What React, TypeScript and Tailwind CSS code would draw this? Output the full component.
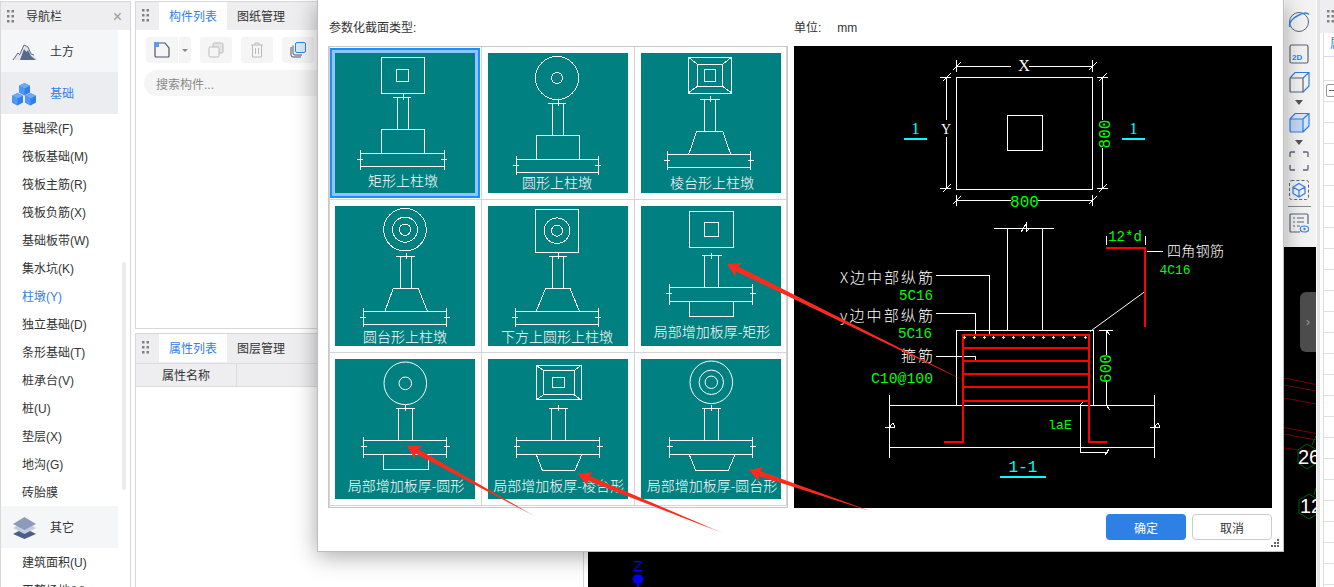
import React from "react";

const rect = (a: number, b: number, c: number, d: number) => `M${a} ${b}H${c}V${d}H${a}Z`;
const col = (l: number, r: number, y: number, b: number, dl: number, dr: number, cx?: number) =>
  `M${dl} ${y}H${dr}M${l} ${y}V${b}M${r} ${y}V${b}M${cx ?? (l + r) / 2} ${y - 3}V${y + 3}`;
const plate = (l: number, r: number, t: number, b: number) =>
  `M${l} ${t}H${r}M${l} ${b}H${r}M${l} ${t - 3}V${b + 3}M${r} ${t - 3}V${b + 3}M${l - 3} ${t + 6}H${l + 3}M${r - 3} ${t + 6}H${r + 3}`;
const frustum = (tl: number, tr: number, bl: number, br: number, t: number, b: number) =>
  `M${tl} ${t}H${tr}L${br} ${b}H${bl}Z`;
const pyramid = (o: number[], m: number[], i: number[]) =>
  rect(o[0], o[1], o[2], o[3]) + rect(m[0], m[1], m[2], m[3]) + rect(i[0], i[1], i[2], i[3]) +
  `M${o[0]} ${o[1]}L${m[0]} ${m[1]}M${o[2]} ${o[1]}L${m[2]} ${m[1]}M${o[0]} ${o[3]}L${m[0]} ${m[3]}M${o[2]} ${o[3]}L${m[2]} ${m[3]}`;

type Cell = { label: string; lx: number; ly: number; d: string; circles?: number[][]; smooth?: boolean };
const cells: Cell[] = [
  { label: "矩形上柱墩", lx: 68, ly: 133, d: rect(46, 4, 89, 40) + rect(61, 16, 73, 28) + col(62.5, 73.5, 44, 76, 58, 76) + rect(46, 76, 89, 100) + plate(25, 109, 100, 113.5) },
  { label: "圆形上柱墩", lx: 69, ly: 135, d: col(64.7, 75.7, 50, 82, 60, 78) + rect(48.3, 82, 91.3, 106) + plate(28.3, 110, 106, 119), circles: [[69, 25, 21.5], [69, 25, 5.5]] },
  { label: "棱台形上柱墩", lx: 71, ly: 135, d: pyramid([47.3, 4, 90.7, 40], [56.3, 11.3, 81.7, 33.3], [63.3, 16, 74.7, 28]) + col(63.3, 74.7, 46.3, 78.3, 59.3, 78.7) + frustum(55.7, 81.7, 47.7, 89.7, 78.3, 101.3) + plate(26.3, 109.7, 101.3, 114.3) },
  { label: "圆台形上柱墩", lx: 70, ly: 136, d: col(65.7, 76.7, 50.3, 82.3, 61.3, 80) + frustum(58.3, 83.3, 50, 92.3, 82.3, 105) + plate(28.3, 111.7, 105, 118.3), circles: [[70, 23.7, 21.3], [70, 23.7, 12.5], [70, 23.7, 5.7]] },
  { label: "下方上圆形上柱墩", lx: 69, ly: 136, d: rect(47.3, 3.3, 90.3, 46.3) + col(64.7, 75.7, 50.3, 82.3, 60.5, 79) + frustum(57.7, 82, 48.3, 91.3, 82.3, 105) + plate(27.3, 110.3, 105, 118.3), circles: [[69, 24.7, 12.8], [69, 24.7, 5.5]] },
  { label: "局部增加板厚-矩形", lx: 71, ly: 131, d: rect(48.3, 5.3, 92.7, 41.7) + rect(63.3, 16.3, 77.7, 30.7) + col(63.3, 77.7, 49.7, 81.3, 61.3, 80.7) + plate(28.3, 111.7, 81.3, 95.7) + rect(48.3, 95.7, 92.7, 110.7) },
  { label: "局部增加板厚-圆形", lx: 71, ly: 132, smooth: true, d: col(63.3, 77.7, 49.3, 81.3, 60.7, 80.3) + plate(28.7, 111.7, 81.3, 95.7) + rect(48.3, 95.7, 93.7, 110.3), circles: [[70.3, 24.3, 21.3], [70.3, 24.3, 6.3]] },
  { label: "局部增加板厚-棱台形", lx: 70.7, ly: 132, d: pyramid([48.3, 6.3, 93, 40.7], [55.7, 11.7, 86, 35.7], [64.3, 18.3, 76.7, 28.7]) + col(63.3, 77.7, 49.3, 81.3, 60.7, 80) + plate(28.7, 111.7, 81.3, 95.7) + `M48.3 95.7L54.3 111.3H87L93.7 95.7` },
  { label: "局部增加板厚-圆台形", lx: 71, ly: 132, smooth: true, d: col(63.3, 77.7, 49.3, 81.3, 60.7, 80) + plate(28.7, 111.7, 81.3, 95.7) + `M48.3 95.7L54.7 111.3H87.3L94 95.7`, circles: [[70.3, 23.3, 21.3], [70.3, 23.3, 12.2], [70.3, 23.3, 6.2]] },
];

function Grip({ className = "" }: { className?: string }) {
  return (
    <svg width="7" height="13" viewBox="0 0 7 13" className={className}>
      {[0, 5, 10].map((y) => [0, 4.5].map((x) => <rect key={`${x}${y}`} x={x} y={y} width="2.5" height="2.5" fill="#808080" />))}
    </svg>
  );
}

function TealCell({ c, selected }: { c: Cell; selected?: boolean }) {
  return (
    <div className="border-r border-b border-[#d4d4d4] pl-[6px] pt-[6px]">
      <div className={`h-[140px] w-[140px] bg-[#008080] ${selected ? "shadow-[0_0_0_3px_#91c4ff,0_0_0_5px_#1890ff]" : ""}`}>
        <svg width="140" height="140" viewBox="0 0 140 140" className="block">
          <path d={c.d} fill="none" stroke="#fff" strokeWidth="1" shapeRendering="crispEdges" />
          {c.circles?.map((k, i) => (
            <circle key={i} cx={k[0]} cy={k[1]} r={k[2]} fill="none" stroke="#fff" strokeWidth="1" shapeRendering={c.smooth ? "auto" : "crispEdges"} />
          ))}
          <text x={c.lx} y={c.ly} textAnchor="middle" fill="#fff" fontSize="14" fontFamily="'Noto Sans CJK SC',sans-serif" fontWeight="300">{c.label}</text>
        </svg>
      </div>
    </div>
  );
}

const MONO = "'Liberation Mono',monospace";
const SERIF = "'Liberation Serif',serif";
const CJK = "'Noto Sans CJK SC',sans-serif";

function Cad() {
  const G = "#00ff00";
  const hoops = [347.5, 360.5, 374, 387, 401];
  const dots = [964, 974, 984, 993, 1003, 1013, 1023, 1033, 1043, 1053, 1063, 1074, 1085.5];
  const tick = (x: number, y: number) => `M${x - 4} ${y + 4}L${x + 4} ${y - 4}`;
  const white =
    // plan
    rect(956.5, 77.5, 1092.5, 189.5) + rect(1007.5, 115.5, 1042.5, 150.5) +
    `M956.5 66.5H1011M1029 66.5H1092.5M956.5 60V72M1092.5 60V72` + tick(956.5, 66.5) + tick(1092.5, 66.5) +
    `M946.5 78V120M946.5 137V188M940 77.5H951M940 188.5H951` + tick(946.5, 77.5) + tick(946.5, 188.5) +
    `M956.5 200.5H1011M1038 200.5H1092.5M956.5 195V206M1092.5 195V206` + tick(956.5, 200.5) + tick(1092.5, 200.5) +
    `M1102.5 78V120M1102.5 148V188M1097 77.5H1108M1097 188.5H1108` + tick(1102.5, 77.5) + tick(1102.5, 188.5) +
    // section
    `M994 228.5H1054M1007.5 228.5V330.5M1042.5 228.5V330.5M1021 232L1026 224L1026 232L1030 228` +
    rect(956.5, 330.5, 1093.5, 405.5) +
    `M889.5 405.5H1154.5M889.5 447.5H1154.5M889.5 395V458M1154.5 395V458M885 427H895M1150 427H1160M889.5 427L893 423L895 427M1154.5 427L1158 423L1160 427` +
    `M936 275.5H989.5V335M936 313.5H975.5V335M936 356.5H975.5V361` +
    `M1147 251.5H1163` +
    `M1106.5 331V355M1106.5 381V405M1099 330.5H1113M1106 405L1110 410M1106 330L1110 335` +
    `M1080.5 404V452.5H1108M1080 405L1083 402M1105 455L1109 449` +
    `M1106 236V245M1145 236V245`;
  return (
    <svg width="478" height="462" viewBox="794 46 478 462" className="block bg-black">
      <path d={white} fill="none" stroke="#fff" strokeWidth="1" shapeRendering="crispEdges" />
      <path d="M1145 291.5L1090 331.5" fill="none" stroke="#fff" strokeWidth="1" />
      {/* cyan section marks */}
      <path d="M904 139H927M1122 139H1145M1000 477H1046" stroke="#00ffff" strokeWidth="2" shapeRendering="crispEdges" />
      {/* rebars */}
      <path d={`M944 442H962.5V335H1089V442H1106.5M1106 247.5H1145V326.5` + hoops.map((y) => `M962.5 ${y}H1089`).join("")} fill="none" stroke="#ff0000" strokeWidth="2" shapeRendering="crispEdges" />
      {dots.map((x) => (
        <path key={x} d={`M${x - 1.5} 337.5H${x + 1.5}M${x} 336V339`} stroke="#ffff00" strokeWidth="1" shapeRendering="crispEdges" />
      ))}
      <g fontFamily={MONO} fontSize="15">
        <text x="1024" y="71" fill="#fff" textAnchor="middle" fontFamily={SERIF} fontSize="16">X</text>
        <text x="946" y="134" fill="#fff" textAnchor="middle" fontFamily={SERIF} fontSize="14">Y</text>
        <text x="1024.5" y="207" fill={G} textAnchor="middle" fontSize="16">800</text>
        <text x="915.5" y="134" fill="#00ffff" textAnchor="middle" fontFamily={SERIF} fontSize="16">1</text>
        <text x="1133.5" y="134" fill="#00ffff" textAnchor="middle" fontFamily={SERIF} fontSize="16">1</text>
        <text x="1023" y="472" fill="#00ffff" textAnchor="middle" fontSize="16">1-1</text>
        <text x="0" y="0" fill={G} textAnchor="middle" fontSize="16" transform="translate(1110 134) rotate(-90)">800</text>
        <text x="0" y="0" fill={G} textAnchor="middle" fontSize="16" transform="translate(1111 368.5) rotate(-90)">600</text>
        <text x="1125" y="241" fill={G} textAnchor="middle" fontSize="14">12*d</text>
        <text x="1175" y="274" fill={G} textAnchor="middle" fontSize="13">4C16</text>
        <text x="899" y="300" fill={G} textLength="34" lengthAdjust="spacingAndGlyphs" fontSize="15">5C16</text>
        <text x="898" y="338" fill={G} textLength="34" lengthAdjust="spacingAndGlyphs" fontSize="15">5C16</text>
        <text x="871" y="383" fill={G} textLength="62" lengthAdjust="spacingAndGlyphs" fontSize="15">C10@100</text>
        <text x="1060" y="429" fill={G} textAnchor="middle" fontSize="13">laE</text>
      </g>
      <g fontFamily={CJK} fill="#fff" fontWeight="300">
        <text x="840" y="283" fontSize="15" textLength="93">X边中部纵筋</text>
        <text x="840" y="321" fontSize="15" textLength="93">y边中部纵筋</text>
        <text x="901" y="361" fontSize="15" textLength="32">箍筋</text>
        <text x="1167" y="256" fontSize="14" textLength="57">四角钢筋</text>
      </g>
    </svg>
  );
}

function Arrow({ id, tip, tail, fade = 0.8 }: { id: string; tip: number[]; tail: number[]; fade?: number }) {
  const dx = tail[0] - tip[0];
  const dy = tail[1] - tip[1];
  const l = Math.hypot(dx, dy);
  const u = [dx / l, dy / l];
  const n = [-u[1], u[0]];
  const pt = (a: number, b: number) => `${tip[0] + u[0] * a + n[0] * b},${tip[1] + u[1] * a + n[1] * b}`;
  const pts = [pt(0, 0), pt(13, 7.5), pt(11, 2.6), `${tail[0]},${tail[1]}`, pt(11, -2.6), pt(13, -7.5)].join(" ");
  return (
    <g>
      <defs>
        <linearGradient id={id} gradientUnits="userSpaceOnUse" x1={tip[0]} y1={tip[1]} x2={tail[0]} y2={tail[1]}>
          <stop offset="0" stopColor="#ff2a1c" />
          <stop offset={fade} stopColor="#ff2a1c" />
          <stop offset="1" stopColor="#ff2a1c" stopOpacity="0.25" />
        </linearGradient>
      </defs>
      <polygon points={pts} fill={`url(#${id})`} />
    </g>
  );
}

const I = "#5b6478";
const B = "#2f80ed";

function ToolRail() {
  return (
    <div className="absolute top-0 right-0 flex h-[247px] w-[32px] flex-col items-center border-l border-white bg-[#f3f3f3] pr-[3px] pt-[11px]">
      <svg width="22" height="22" viewBox="0 0 22 22">
        <circle cx="11" cy="11" r="9.5" fill="none" stroke={I} strokeWidth="1" transform="scale(1 1)" />
        <path d="M2 16C0 12 5 7 10 4.5C15 2 19.5 1.5 20.8 3.5" fill="none" stroke={B} strokeWidth="1.4" />
      </svg>
      <svg width="20" height="20" viewBox="0 0 20 20" className="mt-[11px]">
        <rect x="1" y="1" width="18" height="18" rx="1.5" fill="none" stroke={I} strokeWidth="1.2" />
        <text x="3" y="16" fontSize="8" fontWeight="700" fill={B} fontFamily="'Liberation Sans',sans-serif">2D</text>
      </svg>
      <svg width="21" height="22" viewBox="0 0 21 22" className="mt-[7px]">
        <path d="M1 7V20a1 1 0 0 0 1 1H14V7H1" fill="none" stroke={I} strokeWidth="1.2" />
        <path d="M1 7L6 1.5H20V15L14 21M14 7L20 1.5" fill="none" stroke={B} strokeWidth="1.2" />
      </svg>
      <div className="mt-[7px] h-0 w-0 border-x-[4px] border-t-[5px] border-x-transparent border-t-[#555]" />
      <svg width="21" height="21" viewBox="0 0 21 21" className="mt-[7px]">
        <path d="M1 7L6 1.5H20L14 7Z" fill="#dbe8fa" />
        <path d="M14 7L20 1.5V14L14 20Z" fill="#dbe8fa" />
        <path d="M1 7H14V20H2a1 1 0 0 1-1-1Z" fill="#c4d9f6" />
        <path d="M1 7H14V20H2a1 1 0 0 1-1-1ZM1 7L6 1.5H20V14L14 20M14 7L20 1.5" fill="none" stroke={B} strokeWidth="1.2" />
      </svg>
      <div className="mt-[7px] h-0 w-0 border-x-[4px] border-t-[5px] border-x-transparent border-t-[#555]" />
      <svg width="20" height="20" viewBox="0 0 20 20" className="mt-[6px]">
        <path d="M1 6V2a1 1 0 0 1 1-1H6M14 1H18a1 1 0 0 1 1 1V6M19 14V18a1 1 0 0 1-1 1H14M6 19H2a1 1 0 0 1-1-1V14" fill="none" stroke={I} strokeWidth="1.3" />
      </svg>
      <svg width="20" height="20" viewBox="0 0 20 20" className="mt-[9px]">
        <rect x="0.5" y="0.5" width="19" height="19" rx="2" fill="none" stroke={I} strokeDasharray="3 2" />
        <path d="M10 3.5L16 7V13.5L10 17L4 13.5V7ZM4 7L10 10.5L16 7M10 10.5V17" fill="none" stroke={B} strokeWidth="1.2" />
      </svg>
      <div className="mt-[6px] h-px w-[23px] bg-[#8a8a8a]" />
      <svg width="20" height="20" viewBox="0 0 20 20" className="mt-[6px]">
        <path d="M11 19H2a1 1 0 0 1-1-1V2a1 1 0 0 1 1-1H18a1 1 0 0 1 1 1V11" fill="none" stroke={I} strokeWidth="1.2" />
        <path d="M4 5H6M8 5H15M4 9H6M8 9H15M4 13H6M8 13H11" stroke={I} strokeWidth="1.1" />
        <ellipse cx="15.5" cy="16" rx="4.2" ry="3" fill="#f3f3f3" stroke={B} strokeWidth="1.1" />
        <circle cx="15.5" cy="16" r="1.2" fill={B} />
      </svg>
    </div>
  );
}

function NavHead({ label, active, icon }: { label: string; active?: boolean; icon: React.ReactNode }) {
  return (
    <div className={`flex h-[42px] items-center pl-[11px] pt-[2px] ${active ? "bg-[#ecedf1] text-[#3a7fe0]" : "bg-[#f5f6f8] text-[#333]"}`}>
      <div className="w-[38px]">{icon}</div>
      <span>{label}</span>
    </div>
  );
}

const subs = ["基础梁(F)", "筏板基础(M)", "筏板主筋(R)", "筏板负筋(X)", "基础板带(W)", "集水坑(K)", "柱墩(Y)", "独立基础(D)", "条形基础(T)", "桩承台(V)", "桩(U)", "垫层(X)", "地沟(G)", "砖胎膜"];

function Nav() {
  return (
    <div className="mt-px flex h-full w-[131px] shrink-0 flex-col border-x border-t border-[#d8d8d8]">
      <div className="flex h-[28px] shrink-0 items-center bg-[#eeeef0] pl-[6px] pt-[2px] text-[#333]">
        <Grip className="-mt-[2px]" />
        <span className="ml-[12px]">导航栏</span>
        <span className="ml-auto mr-[8px] text-[16px] leading-none text-[#999]">×</span>
      </div>
      <div className="flex min-h-0 flex-1 overflow-hidden">
        <div className="w-[117px] shrink-0">
          <NavHead label="土方" icon={
            <svg width="25" height="17" viewBox="0 0 25 17" className="block">
              <path d="M0 16L6 8L8 10L12 1L16 3L19 10L22 11L25 16Z" fill="#e3e6ee" />
              <path d="M8 16L12 5L14.5 8L16 6L19 12L24 16Z" fill="#5a6a8c" />
              <path d="M1 16L6 9L8 11" fill="none" stroke="#5a6a8c" />
              <path d="M8 10L12 1L16 3L19 10L22 11" fill="none" stroke="#5a6a8c" />
            </svg>
          } />
          <NavHead label="基础" active icon={
            <svg width="24" height="23" viewBox="0 0 24 23" className="block">
              {[[7, 0], [0, 10], [13, 10]].map(([x, y]) => (
                <g key={`${x}${y}`} transform={`translate(${x} ${y})`}>
                  <path d="M5.5 0L11 2.8V9.5L5.5 12.5L0 9.5V2.8Z" fill="#2f80ed" />
                  <path d="M5.5 0L11 2.8L5.5 5.6L0 2.8Z" fill="#6eaaf5" />
                  <path d="M5.5 5.6V12.5L0 9.5V2.8Z" fill="#4f97f2" />
                </g>
              ))}
            </svg>
          } />
          {subs.map((s) => (
            <div key={s} className={`flex h-[28px] items-center pl-[21px] pt-[2px] ${s === "柱墩(Y)" ? "text-[#3a7fe0]" : "text-[#333]"}`}>{s}</div>
          ))}
          <NavHead label="其它" icon={
            <svg width="25" height="23" viewBox="0 0 25 23" className="block">
              <path d="M1 17L12.5 11L24 17L12.5 22Z" fill="#4a5f8c" />
              <path d="M1 11L12.5 5L24 11L12.5 17Z" fill="#c5cddd" />
              <path d="M1 7L12.5 0L24 7L12.5 13Z" fill="#8c9bbb" />
            </svg>
          } />
          <div className="flex h-[28px] items-center pl-[21px] pt-[2px] text-[#333]">建筑面积(U)</div>
          <div className="flex h-[28px] items-center pl-[21px] pt-[2px] text-[#333]">平整场地(V)</div>
        </div>
        <div className="pl-[4px]">
          <div className="mt-[232px] h-[228px] w-[4px] rounded-full bg-[#ececec]" />
        </div>
      </div>
    </div>
  );
}

function Tabs({ a, b }: { a: string; b: string }) {
  return (
    <div className="flex h-[28px] shrink-0 items-start bg-[#eeeef0] pl-[6px]">
      <Grip className="mt-[7px]" />
      <div className="ml-[10px] flex h-[28px] items-center bg-white px-[10px] pt-[2px] text-[#2f80ed]">{a}</div>
      <div className="flex h-[28px] items-center px-[10px] pt-[2px] text-[#333]">{b}</div>
    </div>
  );
}

function ToolBtn({ children, className = "" }: { children: React.ReactNode; className?: string }) {
  return <div className={`flex h-[26px] w-[32px] items-center justify-center rounded-[3px] bg-[#f5f5f5] ${className}`}>{children}</div>;
}

function Panels() {
  return (
    <div className="ml-[4px] mt-px flex h-full w-[449px] shrink-0 flex-col gap-[4px]">
      <div className="flex h-[328px] flex-col border border-[#d8d8d8]">
        <Tabs a="构件列表" b="图纸管理" />
        <div className="mt-[7px] flex pl-[10px]">
          <ToolBtn className="rounded-r-none">
            <svg width="16" height="16" viewBox="0 0 16 16">
              <path d="M1 3V14a1 1 0 0 0 1 1H14a1 1 0 0 0 1-1V6L11 1H5" fill="none" stroke="#4a5468" strokeWidth="1.2" />
              <rect x="0" y="0" width="5" height="5" fill="#5b9cf0" />
            </svg>
          </ToolBtn>
          <div className="ml-px flex h-[26px] w-[12px] items-center justify-center rounded-r-[3px] bg-[#f5f5f5]">
            <div className="h-0 w-0 border-x-[3px] border-t-[3px] border-x-transparent border-t-[#888]" />
          </div>
          <ToolBtn className="ml-[9px]">
            <svg width="16" height="16" viewBox="0 0 16 16">
              <rect x="5" y="1" width="10" height="10" rx="1.5" fill="#e4e4e4" stroke="#bbb" />
              <rect x="1" y="5" width="10" height="10" rx="1.5" fill="#f5f5f5" stroke="#bbb" />
            </svg>
          </ToolBtn>
          <ToolBtn className="ml-[9px]">
            <svg width="14" height="16" viewBox="0 0 14 16">
              <path d="M1 3H13M5 3V1H9V3M2.5 3V15H11.5V3M5.5 6V12M8.5 6V12" fill="none" stroke="#bbb" />
            </svg>
          </ToolBtn>
          <ToolBtn className="ml-[9px]">
            <svg width="16" height="16" viewBox="0 0 16 16">
              <path d="M1 5V13a2 2 0 0 0 2 2H11" fill="none" stroke="#4a5468" />
              <path d="M3 3.5V11a2 2 0 0 0 2 2H12" fill="none" stroke="#4a5468" />
              <rect x="5.5" y="0.5" width="10" height="10" rx="1.5" fill="#dbe8fa" stroke="#2f80ed" />
            </svg>
          </ToolBtn>
        </div>
        <div className="ml-[8px] mt-[7px] flex h-[26px] items-center rounded-l-full bg-[#f5f5f5] pl-[12px] pt-[3px] text-[#888]">搜索构件...</div>
      </div>
      <div className="flex min-h-0 flex-1 flex-col border border-[#d8d8d8]">
        <Tabs a="属性列表" b="图层管理" />
        <div className="h-px shrink-0 bg-[#eeeef0]" />
        <div className="flex h-[24px] shrink-0 border-t border-b border-[#dcdcdc] bg-[#eeeef0] text-[#333]">
          <div className="flex w-[101px] items-center justify-center border-r border-[#dcdcdc] pt-[2px]">属性名称</div>
        </div>
      </div>
    </div>
  );
}

function Canvas() {
  const reds = ["M1284 378L1316 384.5", "M1284 385L1316 391", "M1284 398L1316 404", "M1284 427.5L1316 433.5", "M1284 434L1316 440", "M1284 448L1316 452"];
  return (
    <div className="relative ml-[4px] h-full w-[728px] shrink-0 overflow-hidden bg-black">
      <svg width="728" height="587" viewBox="588 0 728 587" className="absolute inset-0">
        {reds.map((d) => <path key={d} d={d} stroke="#7a0000" strokeWidth="1" />)}
        <path d="M1312 445L1316 436M1314 495L1316 488" stroke="#006400" />
        <polygon points="1298,450 1307,444 1317,450 1317,463 1307,469 1298,463" fill="none" stroke="#006400" />
        <polygon points="1299,500 1309,494 1319,500 1319,513 1309,519 1299,513" fill="none" stroke="#006400" />
        <text x="1298" y="464" fill="#fff" fontSize="20" fontFamily="'Liberation Sans',sans-serif">26</text>
        <text x="1300" y="513" fill="#fff" fontSize="20" fontFamily="'Liberation Sans',sans-serif">12</text>
        <text x="638" y="571" fill="#0000ff" fontSize="15" textAnchor="middle" fontFamily="'Liberation Sans',sans-serif">Z</text>
        <ellipse cx="638" cy="579" rx="5.5" ry="4.5" fill="#0000ff" />
        <path d="M638 579V587" stroke="#0000ff" strokeWidth="2" />
      </svg>
      <ToolRail />
      <div className="absolute right-0 top-[292px] flex h-[60px] w-[16px] items-center justify-center rounded-l-[6px] bg-[#4d4d4d] text-[13px] text-[#999]">›</div>
    </div>
  );
}

function RightPanel() {
  return (
    <div className="h-full w-[18px] shrink-0 overflow-hidden bg-white pl-px">
      <div className="h-full border-l-[3px] border-[#e4e4e4]">
        <div className="h-[33px] bg-[#eeeef0] pl-[7px] pt-[10px]"><Grip /></div>
        <div className="ml-[3px] h-[23px] overflow-hidden whitespace-nowrap border-l border-[#dcdcdc] pl-[6px] leading-[23px] text-[#2f80ed]">属性</div>
        <div className="ml-[3px] h-[24px] border-l border-t border-[#dcdcdc]" />
        <div className="ml-[3px] border-l border-[#dcdcdc]">
          {Array.from({ length: 25 }, (_, i) => (
            <div key={i} className="h-[21px] border-t border-[#e0e0e0] pl-[2px] pt-[3px]">
              {i === 0 && (
                <div className="flex h-[13px] w-[12px] items-center justify-center rounded-[2px] border border-[#999]">
                  <div className="h-px w-[6px] bg-[#666]" />
                </div>
              )}
            </div>
          ))}
        </div>
      </div>
    </div>
  );
}

function Dialog() {
  return (
    <div className="absolute left-[317px] top-0 flex h-[552px] w-[967px] flex-col border-x border-b border-[#bdbdbd] bg-white pl-[10px] pr-[11px] shadow-[0_4px_22px_rgba(0,0,0,0.35)]">
      <div className="flex h-[46px] shrink-0 items-center pl-px pt-[9px] text-[#333]">
        <span className="w-[465px]">参数化截面类型:</span>
        <span>单位:</span>
        <span className="ml-[16px]">mm</span>
      </div>
      <div className="flex h-[462px] shrink-0 gap-[6px]">
        <div className="grid h-[462px] w-[460px] shrink-0 grid-cols-[153px_153px_152px] grid-rows-[153px_153px_153px] border border-[#c8c8c8] shadow-[inset_1px_0_0_#d4d4d4]">
          {cells.map((c, i) => <TealCell key={c.label} c={c} selected={i === 0} />)}
        </div>
        <Cad />
      </div>
      <div className="mt-[6px] flex justify-end gap-[6px]">
        <button className="flex h-[26px] w-[80px] items-center justify-center rounded-[4px] bg-[#2f80e4] pt-[3px] text-white">确定</button>
        <button className="flex h-[26px] w-[80px] items-center justify-center rounded-[4px] border border-[#ccc] bg-white pt-[3px] text-[#333]">取消</button>
      </div>
      <svg width="9" height="9" viewBox="0 0 9 9" className="absolute bottom-[3px] right-[3px]">
        {[[6, 0], [3, 3], [6, 3], [0, 6], [3, 6], [6, 6]].map(([x, y]) => <rect key={`${x}${y}`} x={x} y={y} width="2" height="2" fill="#666" />)}
      </svg>
    </div>
  );
}

export default function App() {
  return (
    <div className="relative flex h-[587px] w-[1334px] overflow-hidden bg-white text-[12px] [font-family:'Liberation_Sans','Noto_Sans_CJK_SC',sans-serif]">
      <Nav />
      <Panels />
      <Canvas />
      <RightPanel />
      <Dialog />
      <svg width="1334" height="587" viewBox="0 0 1334 587" className="pointer-events-none absolute inset-0">
        <Arrow id="a1" tip={[727, 264]} tail={[977, 387]} fade={0.85} />
        <Arrow id="a2" tip={[407, 446]} tail={[538, 518]} fade={0.82} />
        <Arrow id="a3" tip={[578, 474]} tail={[725, 534]} fade={0.85} />
        <Arrow id="a4" tip={[749, 470]} tail={[873, 512]} fade={0.9} />
      </svg>
    </div>
  );
}
